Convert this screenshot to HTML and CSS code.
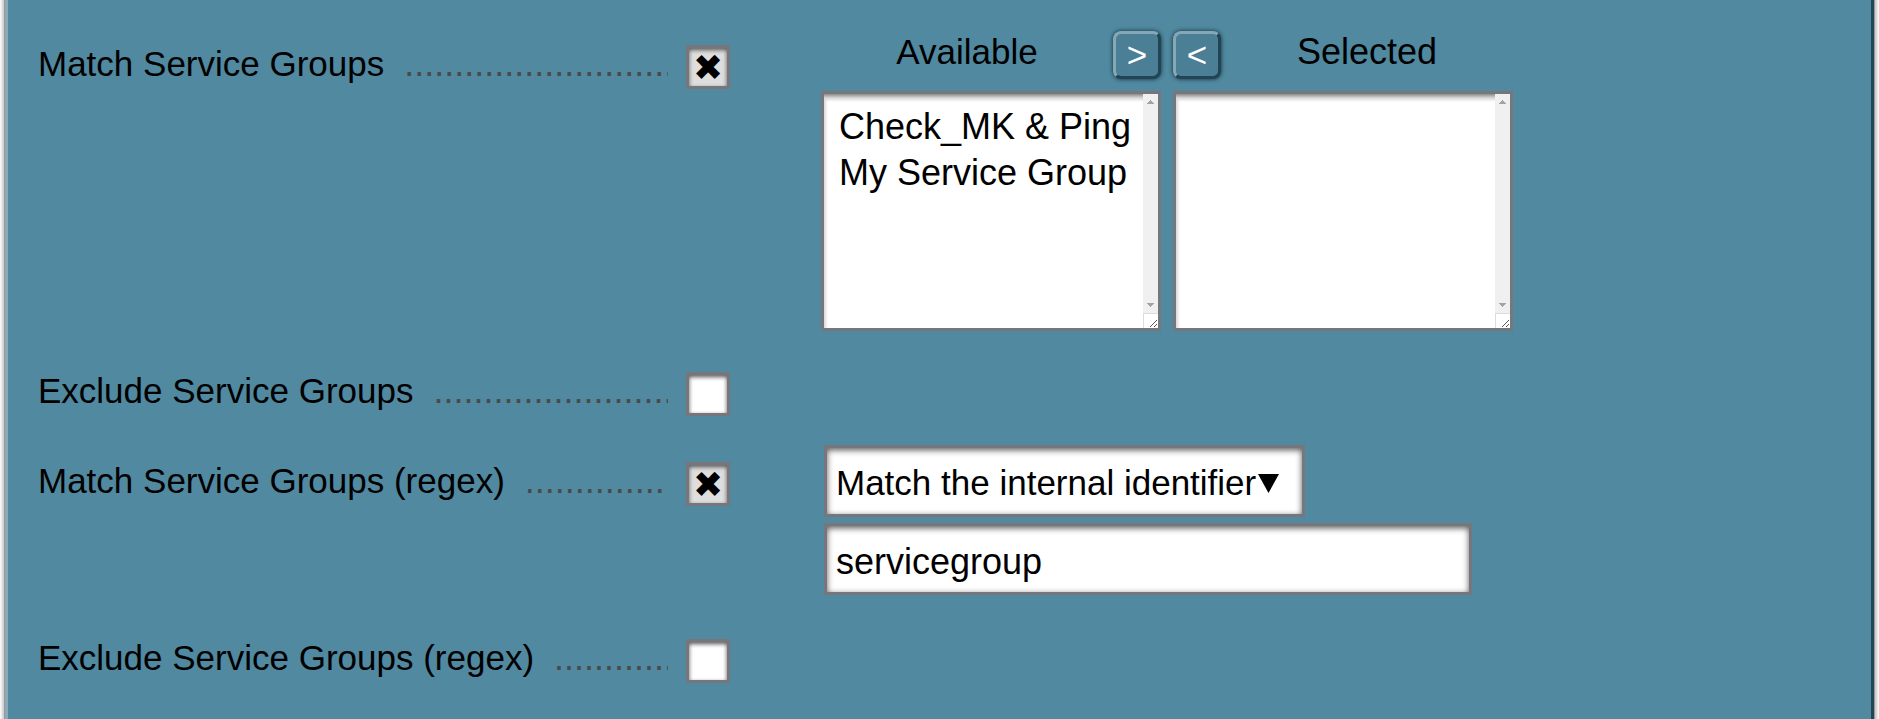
FILE: index.html
```html
<!DOCTYPE html>
<html lang="en">
<head>
<meta charset="utf-8">
<title>Service group conditions</title>
<link rel="stylesheet" href="styles.css">
</head>
<body>
<form class="panel">
  <div class="row row--lists">
    <label class="legend" for="match-groups"><span class="name">Match Service Groups</span><span class="dots" aria-hidden="true">...........................</span></label>
    <input class="check" type="checkbox" id="match-groups" checked>
    <div class="picker">
      <div class="picker-head">
        <div class="picker-side">
          <label class="picker-title" for="available">Available</label>
          <button class="move" type="button">&gt;</button>
        </div>
        <div class="picker-side">
          <button class="move" type="button">&lt;</button>
          <label class="picker-title picker-title--full" for="selected">Selected</label>
        </div>
      </div>
      <div class="picker-lists">
        <div class="listbox">
          <select class="list" id="available" multiple>
            <option>Check_MK &amp; Ping</option>
            <option>My Service Group</option>
          </select>
          <div class="scroll" aria-hidden="true">
            <svg class="arrow" width="15" height="15" viewBox="0 0 15 15" shape-rendering="crispEdges"><path d="M4 10h7v-1h-1v-1h-1v-1h-1v-1h-1v1h-1v1h-1v1h-1z"/></svg>
            <svg class="arrow arrow--down" width="15" height="15" viewBox="0 0 15 15" shape-rendering="crispEdges"><path d="M4 5h7v1h-1v1h-1v1h-1v1h-1v-1h-1v-1h-1v-1h-1z"/></svg>
            <svg class="grip" width="15" height="15" viewBox="0 0 15 15"><path class="grip-edge" d="M0 .5h15M.5 0v15"/><path class="grip-line" d="M7 14l7-7M11 14l3-3"/></svg>
          </div>
        </div>
        <div class="listbox">
          <select class="list" id="selected" multiple></select>
          <div class="scroll" aria-hidden="true">
            <svg class="arrow" width="15" height="15" viewBox="0 0 15 15" shape-rendering="crispEdges"><path d="M4 10h7v-1h-1v-1h-1v-1h-1v-1h-1v1h-1v1h-1v1h-1z"/></svg>
            <svg class="arrow arrow--down" width="15" height="15" viewBox="0 0 15 15" shape-rendering="crispEdges"><path d="M4 5h7v1h-1v1h-1v1h-1v1h-1v-1h-1v-1h-1v-1h-1z"/></svg>
            <svg class="grip" width="15" height="15" viewBox="0 0 15 15"><path class="grip-edge" d="M0 .5h15M.5 0v15"/><path class="grip-line" d="M7 14l7-7M11 14l3-3"/></svg>
          </div>
        </div>
      </div>
    </div>
  </div>

  <div class="row">
    <label class="legend" for="exclude-groups"><span class="name">Exclude Service Groups</span><span class="dots" aria-hidden="true">........................</span></label>
    <input class="check" type="checkbox" id="exclude-groups">
  </div>

  <div class="row row--fields">
    <label class="legend" for="match-regex"><span class="name">Match Service Groups (regex)</span><span class="dots" aria-hidden="true">..............</span></label>
    <input class="check" type="checkbox" id="match-regex" checked>
    <div class="fields">
      <div class="dropdown">
        <select class="field field--select" aria-label="Match mode"><option>Match the internal identifier</option></select>
        <svg class="caret" width="21" height="19" viewBox="0 0 21 19" aria-hidden="true"><path d="M0 0h21L10.500 19z"/></svg>
      </div>
      <input class="field field--text" type="text" value="servicegroup" aria-label="Pattern">
    </div>
  </div>

  <div class="row row--last">
    <label class="legend" for="exclude-regex"><span class="name">Exclude Service Groups (regex)</span><span class="dots" aria-hidden="true">............</span></label>
    <input class="check" type="checkbox" id="exclude-regex">
  </div>
</form>
</body>
</html>
```
FILE: styles.css
```css
* {
  box-sizing: border-box;
}

body {
  margin: 0;
  padding: 0 5px;
  background: linear-gradient(to right, #fff 0, #c8c8c8 4px, #c8c8c8 50%, #c4c0c0 calc(100% - 4px), #fff 100%);
  color: #000;
  font: 35px/46px "Liberation Sans", Arial, sans-serif;
}

.panel {
  display: flex;
  flex-direction: column;
  gap: 29px;
  min-height: 100vh;
  padding: 31px 28px 0 30px;
  background: #5089a0;
  border-left: 3px solid #8aaab8;
  border-right: 3px solid #204555;
  box-shadow: 0 0 0 1px #999;
}

.row {
  --drop: 12px;
  display: grid;
  grid-template-columns: 630px 44px 1fr;
  column-gap: 18px;
  align-items: start;
}

.row--lists {
  --drop: 14px;
}

.row--fields {
  --drop: 17px;
}

.row--last {
  --drop: 15px;
}

.legend {
  display: flex;
  gap: 20px;
  margin-top: calc(var(--drop) - 4px);
  white-space: nowrap;
}

.dots {
  flex: 1;
  min-width: 0;
  overflow: hidden;
  color: #4a4a4a;
  font-size: 36px;
}

.check {
  appearance: none;
  display: grid;
  place-items: center;
  width: 44px;
  height: 44px;
  margin: var(--drop) 0 0;
  background: #fff;
  border: 3px solid #75777c;
  box-shadow: inset 0 2px 4px #555;
}

.check:checked {
  background: #dedede;
}

.check:checked::before {
  content: "✖";
  font: 36px/40px "DejaVu Sans", sans-serif;
}

.picker,
.fields {
  display: flex;
  flex-direction: column;
}

.picker {
  gap: 12px;
  width: 692px;
  margin-left: 73px;
}

.picker-head,
.picker-lists {
  display: grid;
  grid-template-columns: 1fr 1fr;
  gap: 12px;
}

.picker-side {
  display: flex;
}

.picker-title {
  flex: 1;
  line-height: 42px;
  text-align: center;
}

.picker-title--full {
  font-size: 36px;
}

.move {
  width: 48px;
  height: 48px;
  padding: 0;
  color: #fff;
  background: #4a7f96;
  border: 3px solid;
  border-color: #84a8b6 #234452 #234452 #84a8b6;
  border-radius: 8px;
  box-shadow: 0 0 4px #102a35;
  font: 35px/42px "Liberation Sans", Arial, sans-serif;
}

.listbox {
  display: flex;
  height: 240px;
  background: #fff;
  border: 3px solid #75777c;
}

.list {
  flex: 1;
  min-width: 0;
  height: 100%;
  margin: 0;
  padding: 12px 0 0 13px;
  overflow: hidden;
  color: #000;
  background:
    linear-gradient(#8c8c8c, #d8d8d8 4px, transparent 8px),
    linear-gradient(to right, #d8d8d8, transparent 4px);
  border: 0;
  border-radius: 0;
  font: inherit;
  font-size: 36px;
}

.list option {
  min-height: 46px;
  padding: 0 2px;
  line-height: 46px;
}

.scroll {
  display: flex;
  flex-direction: column;
  width: 15px;
  background: #f0f0f0;
}

.arrow {
  fill: #a3a3a3;
}

.arrow--down {
  margin-top: auto;
}

.grip {
  background: #fff;
  fill: none;
}

.grip-edge {
  stroke: #dcdcdc;
}

.grip-line {
  stroke: #555;
}

.fields {
  gap: 6px;
  align-items: flex-start;
  margin-left: 76px;
}

.dropdown {
  position: relative;
}

.field {
  appearance: none;
  display: block;
  height: 72px;
  margin: 0;
  padding: 4px 9px 0;
  color: #000;
  background: #fff;
  border: 3px solid #75777c;
  border-radius: 0;
  box-shadow: inset 0 2px 6px #555;
  font: inherit;
}

.field--select {
  width: 481px;
}

.field--text {
  width: 648px;
  padding-top: 6px;
  font-size: 36px;
}

.caret {
  position: absolute;
  top: 29px;
  right: 26px;
  pointer-events: none;
}
```
